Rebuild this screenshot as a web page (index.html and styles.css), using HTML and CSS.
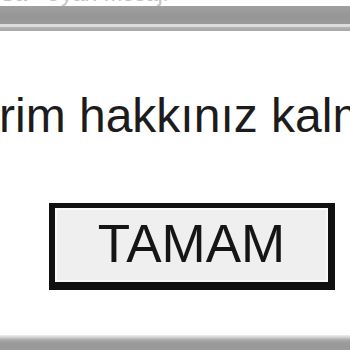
FILE: index.html
```html
<!DOCTYPE html>
<html lang="tr">
<head>
    <meta charset="UTF-8">
    <meta name="viewport" content="width=device-width, initial-scale=1.0">
    <title>Uyarı</title>
    <link rel="stylesheet" href="styles.css">
</head>
<body>

    <div class="dialog">
        <div class="top-strip"><span>Sa   Uyarı mesajı</span></div>
        <div class="title-bar"></div>
        <div class="title-edge"></div>
        <div class="title-line"></div>

        <div class="dialog-body">
            <p class="message">rim hakkınız kalmadı.</p>
            <button class="ok-button">TAMAM</button>
        </div>

        <div class="bottom-bar"></div>
    </div>

</body>
</html>
```

FILE: styles.css
```css
html, body {
    margin: 0;
    padding: 0;
    background: #fff;
}
body {
    font-family: "Liberation Sans", Arial, sans-serif;
    overflow: hidden;
}
.dialog {
    width: 350px;
    height: 350px;
    display: flex;
    flex-direction: column;
    overflow: hidden;
}
/* bits of the window text above the title bar */
.top-strip {
    height: 6px;
    overflow: hidden;
    background: #fff;
}
.top-strip span {
    display: block;
    margin-top: -16px;
    font-size: 22px;
    line-height: 20px;
    color: #c4c4c4;
    white-space: pre;
}
.title-bar {
    height: 18px;
    background: linear-gradient(#a0a0a0, #959595 60%, #9a9a9a);
}
.title-edge {
    height: 3px;
    background: #dcdcdc;
}
.title-line {
    height: 4px;
    background: linear-gradient(#b5b5b5, #a6a6a6);
}
.dialog-body {
    padding-top: 57px;
    display: flex;
    flex-direction: column;
    align-items: flex-start;
}
.message {
    margin: 0 0 0 -1px;
    font-size: 48px;
    line-height: 56px;
    color: #1c1c1c;
    white-space: nowrap;
}
.ok-button {
    margin: 59px 0 0 49px;
    width: 286px;
    height: 87px;
    padding: 0 0 2px 0;
    border-style: solid;
    border-color: #111;
    border-width: 5px 7px 8px 6px;
    background: #efefef;
    box-shadow: inset 0 0 0 2px #fafafa;
    font-family: "Liberation Sans", Arial, sans-serif;
    font-size: 53px;
    line-height: 72px;
    color: #151515;
    cursor: pointer;
}
.bottom-bar {
    margin-top: auto;
    height: 15px;
    background: linear-gradient(#f2f2f2, #a8a8a8 5px, #9a9a9a 8px, #999);
}
```
